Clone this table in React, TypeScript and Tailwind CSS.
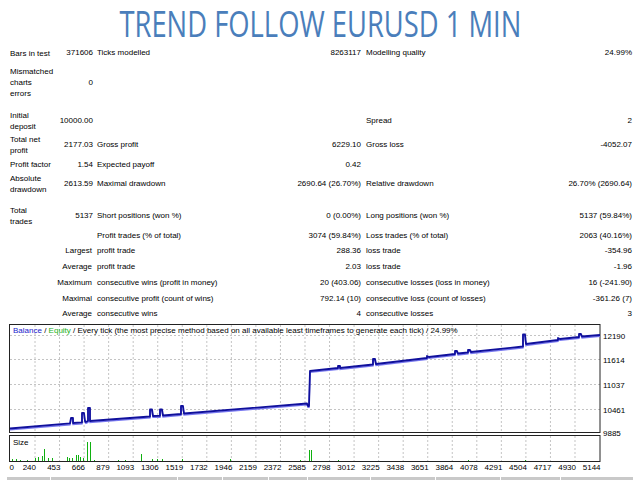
import type { ReactNode } from 'react';

type Row = {
  h: string;
  l1?: ReactNode;
  v1?: string;
  r1?: string;
  l2?: string;
  v2?: string;
  l3?: string;
  v3?: string;
};

const rows: Row[] = [
  { h: 'h-[16px]', l1: 'Bars in test', v1: '371606', l2: 'Ticks modelled', v2: '8263117', l3: 'Modelling quality', v3: '24.99%' },
  { h: 'h-[43px]', l1: (<>Mismatched<br />charts<br />errors</>), v1: '0' },
  { h: 'h-[5px]' },
  { h: 'h-[24px]', l1: (<>Initial<br />deposit</>), v1: '10000.00', l3: 'Spread', v3: '2' },
  { h: 'h-[24px]', l1: (<>Total net<br />profit</>), v1: '2177.03', l2: 'Gross profit', v2: '6229.10', l3: 'Gross loss', v3: '-4052.07' },
  { h: 'h-[15px]', l1: 'Profit factor', v1: '1.54', l2: 'Expected payoff', v2: '0.42' },
  { h: 'h-[24px]', l1: (<>Absolute<br />drawdown</>), v1: '2613.59', l2: 'Maximal drawdown', v2: '2690.64 (26.70%)', l3: 'Relative drawdown', v3: '26.70% (2690.64)' },
  { h: 'h-[8px]' },
  { h: 'h-[24px]', l1: (<>Total<br />trades</>), v1: '5137', l2: 'Short positions (won %)', v2: '0 (0.00%)', l3: 'Long positions (won %)', v3: '5137 (59.84%)' },
  { h: 'h-[15px]', l2: 'Profit trades (% of total)', v2: '3074 (59.84%)', l3: 'Loss trades (% of total)', v3: '2063 (40.16%)' },
  { h: 'h-[16px]', r1: 'Largest', l2: 'profit trade', v2: '288.36', l3: 'loss trade', v3: '-354.96' },
  { h: 'h-[16px]', r1: 'Average', l2: 'profit trade', v2: '2.03', l3: 'loss trade', v3: '-1.96' },
  { h: 'h-[16px]', r1: 'Maximum', l2: 'consecutive wins (profit in money)', v2: '20 (403.06)', l3: 'consecutive losses (loss in money)', v3: '16 (-241.90)' },
  { h: 'h-[15px]', r1: 'Maximal', l2: 'consecutive profit (count of wins)', v2: '792.14 (10)', l3: 'consecutive loss (count of losses)', v3: '-361.26 (7)' },
  { h: 'h-[15px]', r1: 'Average', l2: 'consecutive wins', v2: '4', l3: 'consecutive losses', v3: '3' },
];

function StatRow({ row }: { row: Row }) {
  return (
    <div className={`flex items-center ${row.h}`}>
      <div className="flex w-[93px] items-center pl-[10px]">
        {row.r1 ? (
          <span className="w-full pr-[1px] text-right">{row.r1}</span>
        ) : (
          <>
            <span className="w-[46px] leading-[11px]">{row.l1}</span>
            <span className="flex-1 text-right">{row.v1}</span>
          </>
        )}
      </div>
      <div className="ml-[4px] flex w-[264px] justify-between">
        <span>{row.l2}</span>
        <span>{row.v2}</span>
      </div>
      <div className="ml-[5px] flex w-[266px] justify-between">
        <span>{row.l3}</span>
        <span>{row.v3}</span>
      </div>
    </div>
  );
}

const xLabels = ['0', '240', '453', '666', '879', '1093', '1306', '1519', '1732', '1946', '2159', '2372', '2585', '2798', '3012', '3225', '3438', '3651', '3864', '4078', '4291', '4504', '4717', '4930', '5144'];
const gridX = xLabels.map((_, i) => 35 + 24.545 * (i - 1));
const yTicks = [
  { y: 335.5, label: '12190' },
  { y: 359.5, label: '11614' },
  { y: 384.5, label: '11037' },
  { y: 409.5, label: '10461' },
  { y: 433, label: '9885' },
];

// size histogram: [x, height]
const sizeBars: [number, number][] = [
  [12, 2], [16, 2], [20, 1], [27, 1], [35, 3], [38, 4], [42, 5], [44, 12], [48, 3], [52, 3],
  [67, 4], [69, 3], [72, 3], [76, 6], [78, 6], [80, 4], [83, 3], [87, 19], [90, 19], [94, 1],
  [118, 1], [125, 1], [141, 7], [152, 2], [157, 2], [162, 2], [182, 2], [230, 2], [300, 1],
  [309, 11], [311, 11], [338, 1], [468, 1], [525, 1],
];

const balance =
  'M10,428.5 L70,423.4 L71,418 L73,418 L73,423 L82,422.4 L82,413 L84,413 L85,421 L86,422 L88,421 L88,408 L90,408 L90,421 ' +
  'L150,416.5 L150,409.5 L152,409.5 L153,416 L160,415.8 L160,409.5 L162,409.5 L163,415.5 L181,414 L181,406 L183,406 L184,413.5 ' +
  'L307,403.5 L308,406 L309,406 L310,371 L338,368 L338,366 L340,366 L340,368 L373,364.5 L373,359 L375,359 L376,364 ' +
  'L427,358 L427,356 L429,357 L455,354 L455,351 L457,351 L458,353.5 L468,352.5 L468,350 L470,350 L471,352 ' +
  'L523,346.5 L523,334.5 L525,334.5 L526,344 L558,340 L558,338 L560,339 L579,337 L579,334 L581,334 L582,336.5 L600,335';

const footerCells = ['w-[43px]', 'w-[126px]', 'w-[44px]', 'w-[45px]', 'w-[38px]', 'w-[62px]', 'w-[64px]', 'w-[64px]', 'w-[59px]', 'w-[72px]'];

function Chart() {
  return (
    <svg className="block" width="640" height="156" viewBox="0 321 640 156">
      <g fontFamily="'Liberation Sans', Arial, sans-serif" fontSize={8}>
        {/* grid */}
        {yTicks.slice(0, 4).map((t) => (
          <line key={t.y} x1={10} x2={600} y1={t.y} y2={t.y} stroke="#c4c4c4" strokeDasharray="2 2" />
        ))}
        {gridX.slice(1, 24).map((x) => (
          <g key={x}>
            <line x1={x} x2={x} y1={325} y2={432} stroke="#c4c4c4" strokeDasharray="2 2" />
            <line x1={x} x2={x} y1={436} y2={461} stroke="#c4c4c4" strokeDasharray="2 2" />
          </g>
        ))}

        {/* panels */}
        <rect x={9.5} y={324.5} width={590.5} height={108} fill="none" stroke="#222" />
        <rect x={9.5} y={435.5} width={590.5} height={26} fill="none" stroke="#222" />

        {/* balance / equity */}
        <path d={balance} fill="none" stroke="#7878f0" strokeWidth={1.4} transform="translate(0,1.4)" />
        <path d={balance} fill="none" stroke="#10109c" strokeWidth={1.8} strokeLinejoin="round" />

        {/* size bars */}
        {sizeBars.map(([x, h], i) => (
          <line key={i} x1={x + 0.5} x2={x + 0.5} y1={461} y2={461 - h} stroke="#10b010" />
        ))}

        <text x={13} y={333}>
          <tspan fill="#1a1acc">Balance</tspan>
          <tspan fill="#000"> / </tspan>
          <tspan fill="#18b018">Equity</tspan>
          <tspan fill="#000"> / Every tick (the most precise method based on all available least timeframes to generate each tick) / 24.99%</tspan>
        </text>
        <text x={13} y={445} fill="#000">Size</text>

        {yTicks.map((t) => (
          <text key={t.label} x={603} y={t.y + 3} fill="#000">{t.label}</text>
        ))}
        {xLabels.map((l, i) => (
          <text key={l} x={i === 0 ? 14 : gridX[i] + 1} y={469.5} textAnchor="end" fill="#000">{l}</text>
        ))}
      </g>
    </svg>
  );
}

export default function App() {
  return (
    <div className="h-[480px] w-[640px] overflow-hidden bg-white text-[8px] text-black font-['Liberation_Sans',Arial,sans-serif]">
      <div className="flex h-[45px] items-center justify-center pt-[2px]">
        <h1 className="origin-center scale-x-[0.76] whitespace-nowrap text-[36px] leading-none font-normal text-[#4a7ebb] font-['Open_Sans',sans-serif]">
          TREND FOLLOW EURUSD 1 MIN
        </h1>
      </div>

      <div className="flex flex-col">
        {rows.map((row, i) => (
          <StatRow key={i} row={row} />
        ))}
      </div>

      <Chart />

      <div className="flex h-[3px] gap-[1px] pl-[7px]">
        {footerCells.map((w, i) => (
          <div key={i} className={`h-full bg-[#c9c9c9] ${w}`} />
        ))}
      </div>
    </div>
  );
}
